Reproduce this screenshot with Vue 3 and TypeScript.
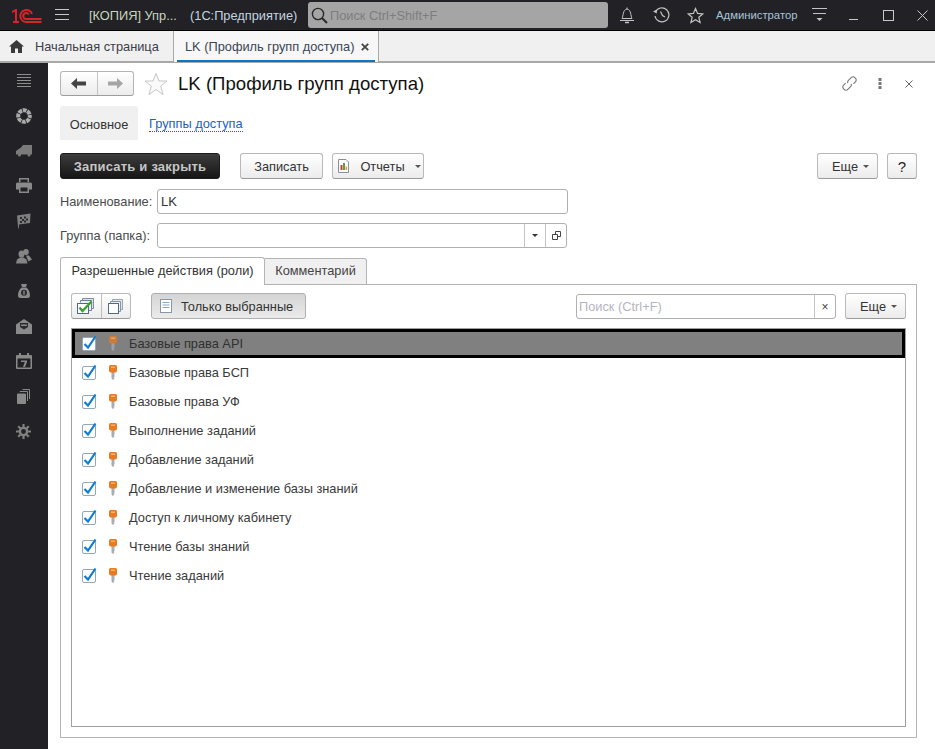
<script setup lang="ts">
const roles: string[] = [
  'Базовые права API',
  'Базовые права БСП',
  'Базовые права УФ',
  'Выполнение заданий',
  'Добавление заданий',
  'Добавление и изменение базы знаний',
  'Доступ к личному кабинету',
  'Чтение базы знаний',
  'Чтение заданий',
]
</script>

<template>
  <div class="app">
    <header class="topbar">
      <svg class="logo" width="30" height="14" viewBox="0 0 30 14" fill="none" stroke="#d8232a" stroke-width="2">
        <path d="M0 3 L4 1 V13 M1 13 H7" />
        <path d="M20 5 A6 6 0 1 0 14.5 13 H29.5" />
        <path d="M16.8 5.5 A3 3 0 1 0 14.5 10 H29.5" />
      </svg>
      <svg class="burger" width="14" height="12" viewBox="0 0 14 12" stroke="#c9c9c9" stroke-width="1">
        <path d="M0 .5H14M0 5.5H14M0 10.5H14" />
      </svg>
      <span class="app-title app-title-a">[КОПИЯ] Упр...</span>
      <span class="app-title app-title-b">(1С:Предприятие)</span>
      <div class="global-search">
        <svg width="17" height="17" viewBox="0 0 17 17" fill="none" stroke="#2a2a2a" stroke-width="1.4">
          <circle cx="7" cy="7" r="5.6" />
          <path d="M11 11l5 5" stroke-width="2" />
        </svg>
        <span>Поиск Ctrl+Shift+F</span>
      </div>
      <svg class="ti bell" width="16" height="18" viewBox="0 0 16 18" fill="none" stroke="#c4c4c4">
        <path d="M8 1.5V3M3 12.5C4.5 10 3.5 4 8 3C12.5 4 11.5 10 13 12.5ZM1 14.5H15" />
        <path d="M6 16.5H10" stroke-width="1.5" />
      </svg>
      <svg class="ti clock" width="17" height="17" viewBox="0 0 17 17" fill="none" stroke="#c4c4c4" stroke-width="1.2">
        <path d="M2.5 5A7 7 0 1 1 2 9" />
        <path d="M0 4.5L3.8 2.5V6.5Z" fill="#c4c4c4" stroke="none" />
        <path d="M7.5 4.5L9.5 8.5L12 10" />
      </svg>
      <svg class="ti star" width="17" height="17" viewBox="0 0 17 17" fill="none" stroke="#c4c4c4" stroke-width="1.2">
        <path d="M8.5 1.5L10.6 6.4L15.8 6.9L11.8 10.3L13.1 15.5L8.5 12.7L3.9 15.5L5.2 10.3L1.2 6.9L6.4 6.4Z" />
      </svg>
      <span class="user">Администратор</span>
      <svg class="ti filter" width="15" height="14" viewBox="0 0 15 14" stroke="#c4c4c4" fill="#c4c4c4">
        <path d="M0 .5H15M1 5.5H14" />
        <path d="M4.5 10H10.500L7.500 13Z" stroke="none" />
      </svg>
      <i class="win-min"></i>
      <i class="win-max"></i>
      <svg class="win-close" width="11" height="11" viewBox="0 0 11 11" stroke="#c9c9c9"><path d="M.5.500L10.500 10.500M10.500.500L.5 10.500" /></svg>
    </header>

    <nav class="tabsbar">
      <div class="home-tab">
        <svg width="15" height="13" viewBox="0 0 15 13" fill="#3a3a3a">
          <path d="M7.500 0L15 6.500H13V13H9V8.500H6V13H2V6.500H0Z" />
        </svg>
        <span>Начальная страница</span>
      </div>
      <div class="doc-tab">
        <span>LK (Профиль групп доступа)</span>
        <svg width="8" height="8" viewBox="0 0 8 8" stroke="#444" stroke-width="1.800"><path d="M.8.800L7.200 7.200M7.200.800L.8 7.200" /></svg>
      </div>
    </nav>

    <div class="body">
      <aside class="sidebar">
        <div class="side-item">
          <svg width="14" height="14" viewBox="0 0 14 14" stroke="#8e8e8e"><path d="M0 .5H14M0 3.500H14M0 6.500H14M0 9.500H14M0 12.500H14" /></svg>
        </div>
        <div class="side-item">
          <svg width="16" height="16" viewBox="0 0 16 16" fill="none" stroke="#a9a9a9" stroke-width="4">
            <circle cx="8" cy="8" r="5.800" stroke-dasharray="3.800 .75" stroke-dashoffset="1.900" />
          </svg>
        </div>
        <div class="side-item">
          <svg width="16" height="12" viewBox="0 0 16 12" fill="#7b7b7b">
            <path d="M5 2.500L7 0H16V9.500H0V6L2 4.500Z" />
            <circle cx="3.500" cy="10" r="1.500" /><circle cx="13" cy="10" r="1.500" />
          </svg>
        </div>
        <div class="side-item">
          <svg width="16" height="15" viewBox="0 0 16 15" fill="#8a8a8a">
            <path d="M3 0H13V4H11.500V1.500H4.500V4H3Z" />
            <path fill-rule="evenodd" d="M1.500 4.500H14.500Q16 4.500 16 6V11.500H13V15H3V11.500H0V6Q0 4.500 1.500 4.500ZM4.500 9.500V13.500H11.500V9.500Z" />
          </svg>
        </div>
        <div class="side-item">
          <svg width="15" height="16" viewBox="0 0 15 16" fill="#7f7f7f">
            <path d="M1 2.500L14.500 .5L14 10L3 11.500L3 15.500H2.300L1.800 11.500Z" />
            <path d="M4 4H6V6H4ZM8 3.500H10V5.500H8ZM6 6H8V8H6ZM10 5.500H12V7.500H10ZM4 8H6V10H4ZM8 7.500H10V9.500H8Z" fill="#2a2a2e" />
          </svg>
        </div>
        <div class="side-item">
          <svg width="16" height="15" viewBox="0 0 16 15" fill="#858585">
            <ellipse cx="10" cy="3" rx="2.800" ry="3" />
            <path d="M10 6.500L13 6.500L16 10.500L12.500 12.500L10.500 8Z" />
            <ellipse cx="5.500" cy="5" rx="3" ry="3.500" />
            <path d="M0 14.500L1 10.500L4 8.500H7.500L10.500 10.500L11.500 14.500Z" />
          </svg>
        </div>
        <div class="side-item">
          <svg width="12" height="14" viewBox="0 0 12 14" fill="#8a8a8a">
            <path d="M3 0H9L8 3H4ZM3.500 3.500H8.500C11 5.500 12 8.500 12 11.500Q12 14 9.500 14H2.500Q0 14 0 11.500C0 8.500 1 5.500 3.500 3.500Z" />
            <circle cx="6" cy="8.800" r="3" fill="#2a2a2e" />
            <path d="M5.300 6.800H6.700V10.800H5.300Z" />
          </svg>
        </div>
        <div class="side-item">
          <svg width="16" height="15" viewBox="0 0 16 15" fill="#8a8a8a">
            <path d="M8 0L16 5.500V15H0V5.500Z" />
            <path d="M4 4H12V8L8 10.500L4 8Z" fill="#2a2a2e" />
            <path d="M5 5.500H11V7H5Z" />
          </svg>
        </div>
        <div class="side-item">
          <svg width="16" height="16" viewBox="0 0 16 16" fill="#8a8a8a">
            <path fill-rule="evenodd" d="M1 2H15Q16 2 16 3V15Q16 16 15 16H1Q0 16 0 15V3Q0 2 1 2ZM1.500 5.500V14.500H14.500V5.500Z" />
            <path d="M3 0H5V3H3ZM11 0H13V3H11Z" />
            <path d="M5 7.500H11V9L9 14H7L8.800 9H5Z" />
          </svg>
        </div>
        <div class="side-item">
          <svg width="13" height="15" viewBox="0 0 13 15" fill="#8a8a8a" stroke="#8a8a8a">
            <path d="M.5 5H8.500V14.500H.5Z" />
            <path d="M3 3V2.500H10.500V12M5.500 .5H12.500V10" fill="none" />
          </svg>
        </div>
        <div class="side-item">
          <svg width="15" height="15" viewBox="0 0 15 15" fill="none" stroke="#808080">
            <circle cx="7.500" cy="7.500" r="3.600" stroke-width="2.400" />
            <path d="M7.500 0V3M7.500 12V15M0 7.500H3M12 7.500H15M2.200 2.200L4.300 4.300M10.700 10.700L12.800 12.800M12.800 2.200L10.700 4.300M4.300 10.700L2.200 12.800" stroke-width="2.200" />
          </svg>
        </div>
      </aside>

      <main class="content">
        <div class="head">
          <div class="nav-group">
            <button class="nav-btn">
              <svg width="15" height="11" viewBox="0 0 15 11" fill="#444"><path d="M0 5.500L6 0V3.500H15V7.500H6V11Z" /></svg>
            </button>
            <button class="nav-btn">
              <svg width="15" height="11" viewBox="0 0 15 11" fill="#a5a5a5"><path d="M15 5.500L9 0V3.500H0V7.500H9V11Z" /></svg>
            </button>
          </div>
          <svg class="fav" width="24" height="24" viewBox="0 0 24 24" fill="#fafafa" stroke="#c6c6c6">
            <path d="M12 1.500L15 9H23L16.700 14L19 22.500L12 17.500L5 22.500L7.300 14L1 9H9Z" />
          </svg>
          <h1>LK (Профиль групп доступа)</h1>
          <svg class="link-ic" width="17" height="17" viewBox="0 0 17 17" fill="none" stroke="#777" stroke-width="1.100">
            <g transform="rotate(-45 8.500 8.500)">
              <path d="M6 5.500H3.500A3 3 0 0 0 3.500 11.500H7A3 3 0 0 0 9.500 10" />
              <path d="M11 11.500H13.500A3 3 0 0 0 13.500 5.500H10A3 3 0 0 0 7.500 7" />
            </g>
          </svg>
          <svg class="dots" width="4" height="11" viewBox="0 0 4 11" fill="#777"><rect width="3" height="3" x=".5" /><rect width="3" height="3" x=".5" y="4" /><rect width="3" height="3" x=".5" y="8" /></svg>
          <svg class="close-form" width="8" height="8" viewBox="0 0 8 8" stroke="#666"><path d="M.5.500L7.500 7.500M7.500.500L.5 7.500" /></svg>
        </div>

        <div class="pages">
          <div class="page-active">Основное</div>
          <a class="page-link">Группы доступа</a>
        </div>

        <div class="cmdbar">
          <button class="btn btn-default">Записать и закрыть</button>
          <button class="btn btn-save">Записать</button>
          <button class="btn btn-reports">
            <svg width="13" height="14" viewBox="0 0 13 14">
              <path d="M1.500.5H9L11.500 3V13.500H1.500Z" fill="#fff" stroke="#8b8f9c" />
              <rect x="3.500" y="6" width="2" height="5" fill="#c8402f" />
              <rect x="6" y="4" width="2" height="7" fill="#5aa04a" />
              <rect x="8.500" y="7.500" width="1.500" height="3.500" fill="#d9a437" />
            </svg>
            <span>Отчеты</span>
            <i class="caret"></i>
          </button>
          <span class="spacer"></span>
          <button class="btn btn-more">Еще <i class="caret"></i></button>
          <button class="btn btn-help">?</button>
        </div>

        <div class="field field-name">
          <label>Наименование:</label>
          <div class="input input-name">LK</div>
        </div>
        <div class="field field-group">
          <label>Группа (папка):</label>
          <div class="input input-group">
            <span class="spacer"></span>
            <span class="input-btn"><i class="caret caret-dark"></i></span>
            <span class="input-btn">
              <svg width="9" height="9" viewBox="0 0 9 9" fill="none" stroke="#444"><path d="M.5 3.500H5.500V8.500H.5ZM3.500 3V.5H8.500V5.500H6" /></svg>
            </span>
          </div>
        </div>

        <div class="tabstrip">
          <div class="tab tab-on">Разрешенные действия (роли)</div>
          <div class="tab tab-off">Комментарий</div>
        </div>

        <section class="panel">
          <div class="toolbar">
            <div class="check-group">
              <button class="tool-btn">
                <svg width="18" height="16" viewBox="0 0 18 16" fill="none">
                  <path d="M5.500 2.500V.5H16.500V10.500H14" stroke="#7d8ea0" fill="#dde3ea" />
                  <path d="M3.500 4.500V2.500H14.500V12.500H12" stroke="#6f8296" fill="#eef1f4" />
                  <rect x=".5" y="5.500" width="11" height="10" fill="#fff" stroke="#4f6a85" />
                  <path d="M2.500 9.500L5.500 13L14.500 3.500" stroke="#3da02f" stroke-width="2.400" />
                </svg>
              </button>
              <button class="tool-btn">
                <svg width="15" height="15" viewBox="0 0 15 15" fill="none">
                  <path d="M4.500 2.500V.5H14.500V10.500H12.500" stroke="#9aa6b2" fill="#e4e8ec" />
                  <path d="M2.500 4.500V2.500H12.500V12.500H10.500" stroke="#8494a4" fill="#eef1f4" />
                  <rect x=".5" y="4.500" width="10" height="10" fill="#fff" stroke="#4f6a85" />
                </svg>
              </button>
            </div>
            <button class="btn btn-pressed">
              <svg width="12" height="14" viewBox="0 0 12 14" fill="none">
                <rect x=".5" y=".5" width="11" height="13" fill="#fff" stroke="#8a96a3" />
                <path d="M2.500 3.500H9.500M2.500 6H9.500M2.500 8.500H9.500" stroke="#8aa9c9" />
              </svg>
              <span>Только выбранные</span>
            </button>
            <span class="spacer"></span>
            <div class="search">
              <span class="search-ph">Поиск (Ctrl+F)</span>
              <span class="search-x">×</span>
            </div>
            <button class="btn btn-more btn-more2">Еще <i class="caret"></i></button>
          </div>

          <div class="list">
            <div v-for="(role, i) in roles" :key="role" class="row" :class="{ 'row-current': i === 0 }">
              <span class="check">
                <svg width="15" height="16" viewBox="0 0 15 16" fill="none" stroke="#0f7dd2" stroke-width="2.200">
                  <path d="M1.500 9L5 12.500L12.500 1.500" />
                </svg>
              </span>
              <svg class="key" width="8" height="15" viewBox="0 0 8 15">
                <path d="M2.500 7H5.500V12L4.700 12.800L5.500 13.500L4 15L2.500 13.500Z" fill="#a7adb3" />
                <path d="M1.500 0H6.500Q8 0 8 1.500V5.500Q8 7 6.500 7.500H1.500Q0 7 0 5.500V1.500Q0 0 1.500 0Z" fill="#ea7a20" />
                <rect x="2" y="1.500" width="4" height="1.500" fill="#f8b56e" />
              </svg>
              <span class="role">{{ role }}</span>
            </div>
          </div>
        </section>
      </main>
    </div>
  </div>
</template>

<style>
html, body { margin: 0; background: #fff; }
</style>

<style scoped>
* { box-sizing: border-box; }
.app {
  width: 935px;
  height: 749px;
  overflow: hidden;
  display: flex;
  flex-direction: column;
  font-family: "Liberation Sans", Arial, sans-serif;
  font-size: 12.8px;
  color: #333;
}
button { font-family: inherit; font-size: 12.8px; color: #333; padding: 0; cursor: default; }
.spacer { flex: 1; }

.topbar {
  height: 31px;
  flex: none;
  display: flex;
  align-items: center;
  background: #212126;
  border-bottom: 1px solid #000;
}
.logo { margin-left: 12px; margin-top: 1px; flex: none; }
.burger { margin-left: 13px; flex: none; }
.app-title { font-size: 12.8px; white-space: nowrap; }
.app-title-a { margin-left: 20px; width: 101px; color: #c7d6bd; }
.app-title-b { color: #c5d5e0; width: 118px; }
.global-search {
  width: 300px;
  height: 26px;
  background: #a5a5a5;
  border-radius: 3px;
  display: flex;
  align-items: center;
  padding-left: 3px;
  gap: 2px;
  color: #7d7d7d;
  font-size: 12.8px;
}
.ti { flex: none; }
.bell { margin-left: 11px; }
.clock { margin-left: 18px; }
.star { margin-left: 17px; }
.user { margin-left: 12px; font-size: 11.300px; color: #a9c4d8; width: 82px; white-space: nowrap; }
.filter { margin-left: 14px; }
.win-min { width: 9px; height: 1px; background: #c9c9c9; margin-left: 22px; margin-top: 9px; flex: none; }
.win-max { width: 9px; height: 9px; border: 1px solid #c9c9c9; margin-left: 25px; flex: none; box-sizing: content-box; }
.win-close { margin-left: 23px; flex: none; }

.tabsbar {
  height: 32px;
  flex: none;
  display: flex;
  background: #f0f0f0;
  border-bottom: 2px solid #a8a8a8;
}
.home-tab {
  width: 174px;
  display: flex;
  align-items: center;
  padding-left: 9px;
  gap: 11px;
  color: #3d3d4a;
  border-right: 1px solid #a8a8a8;
}
.doc-tab {
  width: 205px;
  height: 31px;
  display: flex;
  align-items: center;
  padding-left: 11px;
  gap: 7px;
  color: #3a4656;
  background: #f7f7f7;
  border-right: 1px solid #a8a8a8;
  position: relative;
  white-space: nowrap;
}
.doc-tab::after {
  content: "";
  position: absolute;
  left: 3px;
  right: 3px;
  bottom: 0;
  height: 2px;
  background: #0a78c8;
}

.body { flex: 1; display: flex; min-height: 0; }
.sidebar { width: 48px; flex: none; background: #212126; display: flex; flex-direction: column; }
.side-item { height: 35.100px; display: flex; align-items: center; justify-content: center; flex: none; margin-left: -1px; }

.content {
  flex: 1;
  min-width: 0;
  padding: 8px 18px 11px 12px;
  display: flex;
  flex-direction: column;
}
.head { display: flex; align-items: center; height: 25px; flex: none; }
.nav-group {
  display: flex;
  width: 74px;
  height: 25px;
  border: 1px solid #b4b4b4;
  border-bottom-color: #9c9c9c;
  border-radius: 3px;
  background: linear-gradient(#fff, #ececec);
}
.nav-btn {
  flex: 1;
  border: none;
  background: none;
  display: flex;
  align-items: center;
  justify-content: center;
}
.nav-btn + .nav-btn { border-left: 1px solid #c4c4c4; }
.fav { margin-left: 10px; flex: none; }
h1 {
  margin: 0 0 0 10px;
  font-size: 18.600px;
  font-weight: 400;
  color: #111;
  flex: 1;
  white-space: nowrap;
}
.link-ic { flex: none; margin-right: 20px; }
.dots { flex: none; margin-right: 23px; }
.close-form { flex: none; margin-right: 4px; }

.pages { display: flex; height: 34px; margin-top: 10px; flex: none; }
.page-active {
  width: 78px;
  background: #f0f0f0;
  border-radius: 3px 3px 0 0;
  display: flex;
  align-items: center;
  justify-content: center;
  padding-top: 2px;
  color: #333;
}
.page-link {
  margin-left: 11px;
  margin-top: 2px;
  align-self: center;
  color: #1d5fb8;
  border-bottom: 1px dotted #1d5fb8;
  line-height: 14px;
}

.btn {
  height: 26px;
  border: 1px solid #b9b9b9;
  border-bottom-color: #9a9a9a;
  border-radius: 3px;
  background: linear-gradient(#fff, #ececec);
  display: inline-flex;
  align-items: center;
  justify-content: center;
  flex: none;
  white-space: nowrap;
}
.cmdbar { display: flex; height: 26px; margin-top: 13px; flex: none; }
.btn-default {
  width: 160px;
  background: linear-gradient(#3d3d3d, #151515);
  border-color: #1c1c1c;
  color: #c6c6c6;
  font-weight: 700;
  font-size: 13px;
  letter-spacing: .2px;
}
.btn-save { width: 83px; margin-left: 20px; }
.btn-reports { width: 92px; margin-left: 9px; gap: 10px; }
.btn-reports svg { margin-left: 2px; }
.btn-more { width: 61px; gap: 5px; padding-left: 6px; }
.btn-help { width: 30px; margin-left: 9px; font-size: 15px; color: #222; }
.caret {
  display: inline-block;
  width: 0;
  height: 0;
  border-left: 3px solid transparent;
  border-right: 3px solid transparent;
  border-top: 3px solid #555;
  margin-top: 1px;
}

.field { display: flex; align-items: center; height: 25px; flex: none; }
.field-name { margin-top: 10px; }
.field-group { margin-top: 9px; }
.field label { width: 97px; color: #4a4a4a; white-space: nowrap; flex: none; }
.input {
  height: 25px;
  border: 1px solid #b0b0b0;
  border-radius: 3px;
  display: flex;
  align-items: center;
  padding-left: 3px;
  background: #fff;
  color: #333;
}
.input-name { width: 411px; font-size: 13px; }
.input-group { width: 410px; padding-left: 0; }
.input-btn {
  width: 21px;
  height: 23px;
  border-left: 1px solid #c4c4c4;
  display: flex;
  align-items: center;
  justify-content: center;
}
.caret-dark { border-top-color: #333; margin-top: 0; }

.tabstrip { display: flex; height: 28px; margin-top: 9px; flex: none; position: relative; z-index: 1; }
.tab { display: flex; align-items: center; justify-content: center; white-space: nowrap; padding-bottom: 2px; }
.tab-on {
  width: 205px;
  height: 28px;
  background: #fff;
  border: 1px solid #b4b4b4;
  border-bottom: none;
  border-radius: 3px 3px 0 0;
  color: #333;
}
.tab-off {
  width: 102px;
  height: 27px;
  margin-top: 1px;
  background: #f0f0f0;
  border: 1px solid #b4b4b4;
  border-left: none;
  border-radius: 0 3px 0 0;
  color: #444;
}
.panel {
  flex: 1;
  min-height: 0;
  margin-top: -1px;
  border: 1px solid #b4b4b4;
  padding: 8px 10px 10px;
  display: flex;
  flex-direction: column;
}
.toolbar { display: flex; align-items: center; height: 26px; flex: none; }
.check-group {
  width: 60px;
  height: 26px;
  display: flex;
  border: 1px solid #b9b9b9;
  border-bottom-color: #9a9a9a;
  border-radius: 3px;
  background: linear-gradient(#fff, #ececec);
}
.tool-btn { flex: 1; border: none; background: none; display: flex; align-items: center; justify-content: center; }
.tool-btn + .tool-btn { border-left: 1px solid #bdbdbd; }
.btn-pressed {
  width: 155px;
  margin-left: 20px;
  gap: 9px;
  justify-content: flex-start;
  padding-left: 8px;
  background: linear-gradient(#d4d4d4, #ebebeb);
  border-color: #b0b0b0;
}
.search {
  width: 260px;
  height: 25px;
  margin-top: 1px;
  border: 1px solid #b0b0b0;
  border-radius: 3px;
  display: flex;
  align-items: center;
  padding-left: 2px;
}
.search-ph { flex: 1; color: #b5b5c0; }
.search-x {
  width: 21px;
  height: 23px;
  border-left: 1px solid #c4c4c4;
  display: flex;
  align-items: center;
  justify-content: center;
  color: #444;
  font-size: 12px;
}
.btn-more2 { margin-left: 9px; }

.list {
  flex: 1;
  min-height: 0;
  margin-top: 9px;
  border: 1px solid #a0a0a0;
  display: flex;
  flex-direction: column;
}
.row {
  height: 29px;
  flex: none;
  display: flex;
  align-items: center;
  padding-left: 10px;
  color: #3a3a3a;
}
.row-current {
  background: #808080;
  outline: 3px solid #000;
  outline-offset: -3px;
  color: #303030;
}
.check {
  position: relative;
  width: 14px;
  height: 14px;
  border: 1px solid #93a7b8;
  border-radius: 2px;
  background: #fff;
  flex: none;
}
.check svg { position: absolute; left: 0; top: -3px; }
.key { margin-left: 13px; flex: none; }
.row-current .key { opacity: .75; }
.role { margin-left: 12px; white-space: nowrap; }
</style>
